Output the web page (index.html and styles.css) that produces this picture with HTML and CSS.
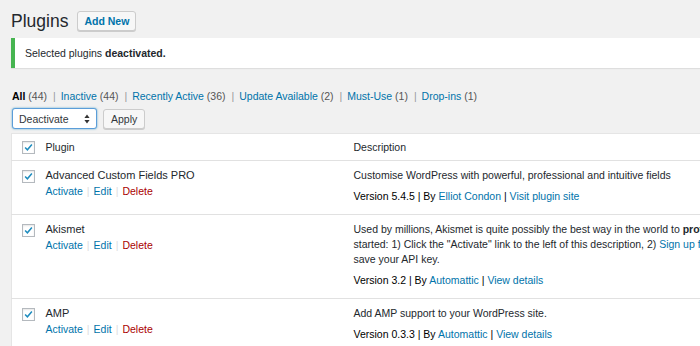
FILE: index.html
```html
<!DOCTYPE html>
<html lang="en">
<head>
  <meta charset="UTF-8" />
  <title>Plugins</title>
  <link rel="stylesheet" href="styles.css">
</head>
<body>
  <div class="wrap">
    <div class="page-head">
      <h1>Plugins</h1>
      <a class="button add-new" href="#">Add New</a>
    </div>

    <div class="notice">
      <p>Selected plugins <b>deactivated.</b></p>
    </div>

    <ul class="filters">
      <li><b>All</b> <span class="count">(44)</span> <span class="sep">|</span></li>
      <li><a href="#">Inactive</a> <span class="count">(44)</span> <span class="sep">|</span></li>
      <li><a href="#">Recently Active</a> <span class="count">(36)</span> <span class="sep">|</span></li>
      <li><a href="#">Update Available</a> <span class="count">(2)</span> <span class="sep">|</span></li>
      <li><a href="#">Must-Use</a> <span class="count">(1)</span> <span class="sep">|</span></li>
      <li><a href="#">Drop-ins</a> <span class="count">(1)</span></li>
    </ul>

    <div class="bulk">
      <div class="select">
        <span>Deactivate</span>
        <svg width="6" height="10" viewBox="0 0 6 10"><path d="M3 0.5 L5.6 4 H0.4 Z M3 9.5 L5.6 6 H0.4 Z" fill="#333"/></svg>
      </div>
      <a class="button" href="#">Apply</a>
    </div>

    <table class="plugins">
      <thead>
        <tr>
          <th class="cb"><span class="check"></span></th>
          <th class="name">Plugin</th>
          <th>Description</th>
        </tr>
      </thead>
      <tbody>
        <tr>
          <td class="cb"><span class="check"></span></td>
          <td class="name">
            <div class="title">Advanced Custom Fields PRO</div>
            <div class="actions"><a href="#">Activate</a><span class="sep">|</span><a href="#">Edit</a><span class="sep">|</span><a class="delete" href="#">Delete</a></div>
          </td>
          <td class="desc">
            <p>Customise WordPress with powerful, professional and intuitive fields</p>
            <p class="meta">Version 5.4.5 | By <a href="#">Elliot Condon</a> | <a href="#">Visit plugin site</a></p>
          </td>
        </tr>
        <tr>
          <td class="cb"><span class="check"></span></td>
          <td class="name">
            <div class="title">Akismet</div>
            <div class="actions"><a href="#">Activate</a><span class="sep">|</span><a href="#">Edit</a><span class="sep">|</span><a class="delete" href="#">Delete</a></div>
          </td>
          <td class="desc">
            <p>Used by millions, Akismet is quite possibly the best way in the world to <b>protect your blog from spam</b>. It keeps your site protected even while you sleep. To get<br>started: 1) Click the "Activate" link to the left of this description, 2) <a href="#">Sign up for an Akismet plan</a> to get an API key, and 3) Go to your Akismet configuration page, and<br>save your API key.</p>
            <p class="meta">Version 3.2 | By <a href="#">Automattic</a> | <a href="#">View details</a></p>
          </td>
        </tr>
        <tr>
          <td class="cb"><span class="check"></span></td>
          <td class="name">
            <div class="title">AMP</div>
            <div class="actions"><a href="#">Activate</a><span class="sep">|</span><a href="#">Edit</a><span class="sep">|</span><a class="delete" href="#">Delete</a></div>
          </td>
          <td class="desc">
            <p>Add AMP support to your WordPress site.</p>
            <p class="meta">Version 0.3.3 | By <a href="#">Automattic</a> | <a href="#">View details</a></p>
          </td>
        </tr>
      </tbody>
    </table>
  </div>
</body>
</html>
```

FILE: styles.css
```css
* {
  margin: 0;
  padding: 0;
  box-sizing: border-box;
}

body {
  background: #f1f1f1;
  color: #23282d;
  font-family: 'Liberation Sans', Arial, sans-serif;
  font-size: 10.5px;
  overflow: hidden;
}

a {
  color: #0073aa;
  text-decoration: none;
}

.wrap {
  padding: 8px 0 0 11px;
  width: 1100px;
}

.page-head {
  display: flex;
  align-items: center;
  gap: 9px;
  height: 26px;
}

h1 {
  font-size: 17.5px;
  font-weight: 400;
  color: #23282d;
}

.button {
  display: inline-flex;
  align-items: center;
  height: 21px;
  padding: 0 7px;
  border: 1px solid #ccc;
  border-radius: 3px;
  background: #f7f7f7;
  box-shadow: 0 1px 0 #ccc;
  color: #555;
  font-size: 10.5px;
}

.add-new {
  height: 20px;
  padding: 0 6px;
  color: #0073aa;
  font-weight: 600;
}

.notice {
  margin-top: 4px;
  height: 30px;
  display: flex;
  align-items: center;
  background: #fff;
  border-left: 4px solid #46b450;
  box-shadow: 0 1px 1px rgba(0, 0, 0, 0.08);
  padding-left: 10px;
}

.filters {
  list-style: none;
  display: flex;
  margin-top: 21px;
  padding-left: 1px;
  color: #555;
  line-height: 14px;
}

.filters li {
  margin-right: 5px;
}

.filters b {
  color: #000;
}

.filters .sep {
  color: #999;
  margin-left: 3px;
}

.bulk {
  display: flex;
  gap: 6px;
  margin-top: 5px;
  padding-left: 1px;
}

.select {
  width: 85px;
  height: 21px;
  display: flex;
  align-items: center;
  justify-content: space-between;
  padding: 0 6px;
  background: #fff;
  border: 1px solid #5b9dd9;
  border-radius: 3px;
  box-shadow: 0 0 2px rgba(30, 140, 190, 0.8);
  color: #32373c;
}

.bulk .button {
  margin-top: 1px;
  height: 20px;
  color: #32373c;
}

.plugins {
  margin-top: 4px;
  width: 100%;
  table-layout: fixed;
  border-collapse: collapse;
  background: #fff;
  border: 1px solid #e5e5e5;
}

.plugins th {
  text-align: left;
  font-weight: 400;
  height: 27px;
  padding: 0 10px;
  border-bottom: 1px solid #e1e1e1;
}

.plugins td {
  vertical-align: top;
  padding: 7px 10px 10px;
  border-bottom: 1px solid #e1e1e1;
  line-height: 15px;
}

.plugins .cb {
  width: 24px;
  padding-left: 10px;
  padding-right: 0;
}

.plugins td.cb {
  padding-top: 9px;
}

.plugins .name {
  width: 308px;
}

.check {
  display: block;
  width: 13px;
  height: 13px;
  border: 1px solid #b4b9be;
  background: #fff url("data:image/svg+xml,%3Csvg xmlns='http://www.w3.org/2000/svg' viewBox='0 0 13 13'%3E%3Cpath d='M2.5 6.5 L5.2 9.2 L10.5 3' fill='none' stroke='%231e8cbe' stroke-width='1.8'/%3E%3C/svg%3E") no-repeat center;
  box-shadow: inset 0 1px 2px rgba(0, 0, 0, 0.1);
}

.title {
  color: #23282d;
  font-size: 11px;
}

.actions {
  margin-top: 1px;
}

.actions .sep {
  color: #ddd;
  margin: 0 4px;
}

.actions .delete {
  color: #a00;
}

.desc {
  white-space: nowrap;
  overflow: hidden;
}

.desc .meta {
  margin-top: 6px;
  color: #000;
}
```
